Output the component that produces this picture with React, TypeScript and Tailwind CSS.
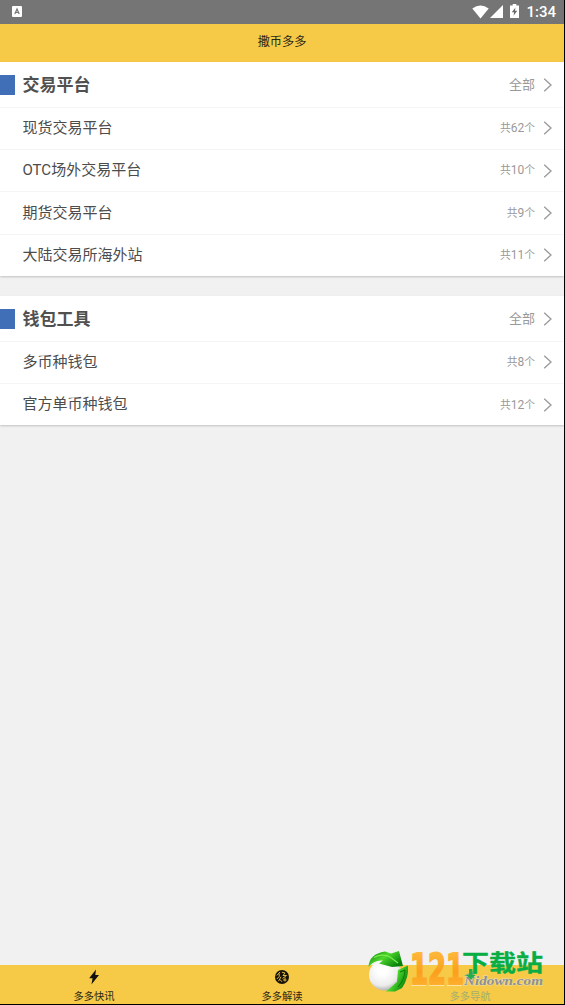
import clsx from 'clsx';

interface Item {
  title: string;
  count: number;
}

interface SectionProps {
  title: string;
  items: Item[];
}

const exchanges: Item[] = [
  { title: '现货交易平台', count: 62 },
  { title: 'OTC场外交易平台', count: 10 },
  { title: '期货交易平台', count: 9 },
  { title: '大陆交易所海外站', count: 11 },
];

const wallets: Item[] = [
  { title: '多币种钱包', count: 8 },
  { title: '官方单币种钱包', count: 12 },
];

const Chevron = () => (
  <svg className="h-[14px] w-[9px]" viewBox="0 0 9 14" fill="none">
    <path d="M1.2 0.8L8 7L1.2 13.2" stroke="#999" strokeWidth="1.3" />
  </svg>
);

const StatusBar = () => (
  <div className="flex h-[23.5px] items-center justify-between bg-[#757575] pr-2 pl-3">
    <svg className="h-[11px] w-[10px]" viewBox="0 0 10 11">
      <rect width="10" height="11" rx="1" fill="#fff" />
      <path
        d="M2.8 8L5 3L7.2 8M3.6 6.5H6.4"
        fill="none"
        stroke="#757575"
        strokeWidth="1.2"
      />
    </svg>
    <div className="flex items-center">
      <svg className="h-[14px] w-[17px]" viewBox="0 0 17 14">
        <path d="M0.3 3.6Q8.5 -2.6 16.7 3.6L8.5 13.6Z" fill="#fff" />
      </svg>
      <svg className="ml-[1px] h-[13px] w-[13px]" viewBox="0 0 13 13">
        <path d="M13 0V13H0Z" fill="#fff" />
      </svg>
      <svg className="mr-[7px] mb-[2px] ml-[7px] h-[14px] w-[9px]" viewBox="0 0 9 14">
        <path d="M0 1.5H2.7V0H6.3V1.5H9V14H0Z" fill="#fff" />
        <path d="M5.5 3.5L1.8 8.2H4.1L3.6 11.8L7.2 6.8H4.9Z" fill="#666" />
      </svg>
      <span className="pt-[2px] font-[Roboto] text-[15px] leading-none font-medium text-white">
        1:34
      </span>
    </div>
  </div>
);

const Section = ({ title, items }: SectionProps) => (
  <section className="bg-white shadow-[0_1px_2px_rgba(0,0,0,0.2)]">
    <div className="flex h-[45px] items-center justify-between pt-[1.5px] pr-3">
      <div className="flex items-center gap-[7.5px]">
        <span className="h-5 w-[15px] bg-[#416fb7]" />
        <h2 className="text-[17px] leading-5 font-bold text-[#505050]">
          {title}
        </h2>
      </div>
      <div className="flex items-center gap-2 text-[13px] text-[#999]">
        <span>全部</span>
        <Chevron />
      </div>
    </div>
    {items.map((item) => (
      <div
        key={item.title}
        className="flex h-[42.4px] items-center justify-between border-t border-[#f5f5f5] pr-3 pl-[22.5px]"
      >
        <span className="text-[15px] text-[#4c4c4c]">{item.title}</span>
        <div className="flex items-center gap-2 text-[10.8px] text-[#999]">
          <span>
            共<span className="text-[12px]">{item.count}</span>个
          </span>
          <Chevron />
        </div>
      </div>
    ))}
  </section>
);

const BoltIcon = () => (
  <svg className="h-4 w-4" viewBox="0 0 16 16">
    <path d="M10 0.5L3.2 9.2H6.6L5.4 15.5L13 6.1H9.3Z" fill="#111" />
  </svg>
);

const CoinIcon = () => (
  <svg className="h-4 w-4" viewBox="0 0 16 16" fill="none">
    <circle cx="8" cy="8" r="7" fill="#161208" />
    <path
      d="M2.8 6.5L6 3M5.2 4.5V7.5L2.8 10M7.8 3.2L11 4L9 6.5H12.5L8.5 9.5M4.5 12.2L7 7.8M6 10.5L8 12.8M9 11H12.5M11 8.5V12.5"
      stroke="#f6ca46"
      strokeWidth="0.9"
    />
  </svg>
);

const CompassIcon = () => (
  <svg className="h-4 w-4" viewBox="0 0 16 16">
    <path d="M14 1L9.5 14L7.5 8.5L2 6.5Z" fill="#8fae86" />
  </svg>
);

const tabs = [
  { label: '多多快讯', icon: <BoltIcon />, active: false },
  { label: '多多解读', icon: <CoinIcon />, active: false },
  { label: '多多导航', icon: <CompassIcon />, active: true },
];

const TabBar = () => (
  <nav className="grid h-[39px] grid-cols-3 bg-[#f6ca46]">
    {tabs.map((tab) => (
      <div key={tab.label} className="flex flex-col items-center pt-1">
        {tab.icon}
        <span
          className={clsx(
            'mt-[5px] text-[10.3px] leading-[14px]',
            tab.active ? 'text-[#a2ae72]' : 'text-[#2d2717]',
          )}
        >
          {tab.label}
        </span>
      </div>
    ))}
  </nav>
);

const SiteBadge = () => (
  <svg
    className="absolute top-[945px] left-[365px] h-[52px] w-[184px]"
    viewBox="0 0 184 52"
  >
    <defs>
      <radialGradient id="ball" cx="0.4" cy="0.35" r="0.7">
        <stop offset="0.2" stopColor="#fff" />
        <stop offset="0.7" stopColor="#ececec" />
        <stop offset="1" stopColor="#a5a5a5" />
      </radialGradient>
      <linearGradient id="leaf" x1="0" y1="0" x2="1" y2="0.6">
        <stop offset="0" stopColor="#08780b" />
        <stop offset="0.5" stopColor="#4ed92d" />
        <stop offset="1" stopColor="#07810c" />
      </linearGradient>
      <linearGradient id="gold" x1="0" y1="0" x2="0" y2="1">
        <stop offset="0" stopColor="#ffc34a" />
        <stop offset="0.55" stopColor="#fb9f1c" />
        <stop offset="1" stopColor="#ffb93a" />
      </linearGradient>
    </defs>
    <ellipse cx="20.5" cy="30" rx="16.5" ry="15.5" fill="url(#ball)" />
    <path
      d="M3.5 22Q4 9 20 6.5L26 8.5L34 6L38 21L27 22L14 18.5L18 15.5Q9 14.5 3.5 22Z"
      fill="url(#leaf)"
    />
    <path
      d="M9 12.5Q17 8 25 12L33 18"
      fill="none"
      stroke="#7bed50"
      strokeWidth="1.2"
    />
    <path d="M33 25L43 20.5Q44 33 37 43L30 46.5L21 46.5L32 37Z" fill="url(#leaf)" />
    <path d="M35 27L40 25Q40 34 33 42" fill="none" stroke="#067a0a" />
    <text
      x="45"
      y="39"
      textLength="54"
      lengthAdjust="spacingAndGlyphs"
      fill="url(#gold)"
      stroke="url(#gold)"
      strokeWidth="2"
      className="font-['DejaVu_Sans'] text-[43px] font-bold"
    >
      121
    </text>
    <path
      d="M46 40.5H61M64 40.5H79M82 40.5H97"
      stroke="#ffe3a0"
      strokeWidth="1"
    />
    <text
      x="97"
      y="26"
      textLength="81"
      lengthAdjust="spacingAndGlyphs"
      fill="#08ad43"
      stroke="#08ad43"
      strokeWidth="0.3"
      className="font-['Noto_Sans_CJK_SC'] text-[23px] font-bold"
    >
      下载站
    </text>
    <text
      x="99"
      y="40"
      textLength="79"
      lengthAdjust="spacingAndGlyphs"
      fill="#8f8f8f"
      stroke="#eadfb8"
      strokeWidth="1"
      paintOrder="stroke"
      className="font-['Liberation_Serif'] text-[13px] font-bold italic"
    >
      Nidown.com
    </text>
    <path d="M104 24H107.5V30H110.5L106 34.5L101 30H104Z" fill="#20b04b" />
  </svg>
);

const App = () => (
  <div className="relative h-[1005px] w-[565px] overflow-hidden border-r border-b border-black bg-[#f1f1f1] font-[Roboto,'Noto_Sans_CJK_SC',sans-serif]">
    <div className="flex h-full flex-col">
      <StatusBar />
      <header className="flex h-[38px] items-center justify-center bg-[#f6ca46] pb-px text-[12.2px] text-[#2d2717]">
        撒币多多
      </header>
      <main className="flex grow flex-col gap-[19.5px]">
        <Section title="交易平台" items={exchanges} />
        <Section title="钱包工具" items={wallets} />
      </main>
      <TabBar />
    </div>
    <SiteBadge />
  </div>
);

export default App;
